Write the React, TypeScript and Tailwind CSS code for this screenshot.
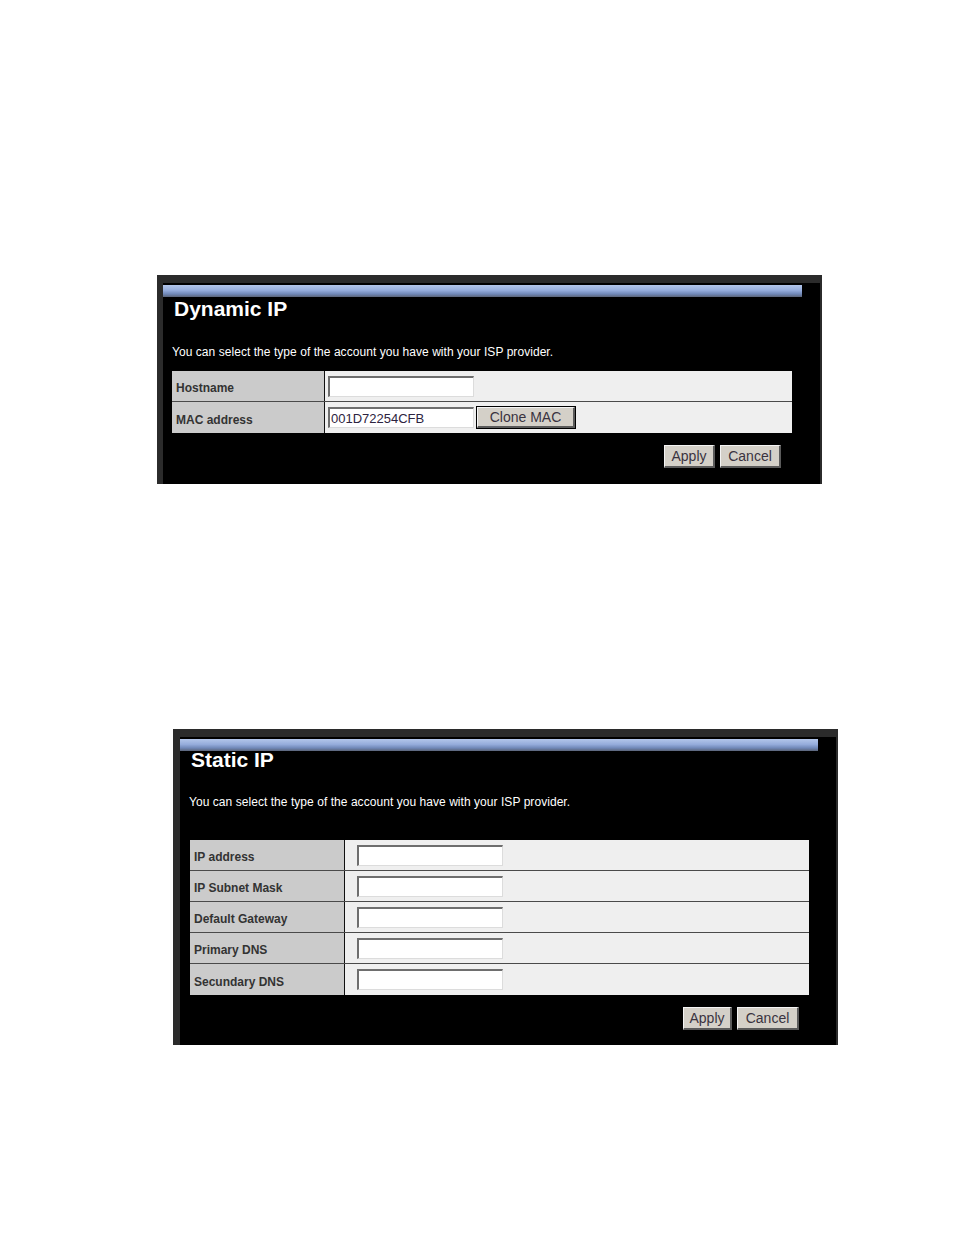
import React from 'react';

const font = { fontFamily: '"Liberation Sans", Arial, sans-serif' };

// Classic inset text field
const Field: React.FC<{ value?: string; className?: string }> = ({ value = '', className = '' }) => (
  <div
    className={`h-[21px] w-[146px] bg-white border-t-2 border-l-2 border-b border-r border-t-[#6e6e6e] border-l-[#6e6e6e] border-b-[#dcdcdc] border-r-[#dcdcdc] flex items-center pl-[1px] text-[13px] text-[#2d2440] leading-none ${className}`}
  >
    {value}
  </div>
);

// Raised grey button
const Btn: React.FC<{ label: string; className?: string }> = ({ label, className = '' }) => (
  <div
    className={`bg-[#d4d0c8] border-t border-l border-b-2 border-r-2 border-t-[#f4f4f4] border-l-[#f4f4f4] border-b-[#5a5a5a] border-r-[#5a5a5a] flex items-center justify-center text-[14px] text-[#3a3340] leading-none ${className}`}
  >
    {label}
  </div>
);

const Row: React.FC<{
  label: string;
  last?: boolean;
  children: React.ReactNode;
  labelClass?: string;
  valueClass?: string;
}> = ({ label, last, children, labelClass = 'w-[153px]', valueClass = 'pl-[3px]' }) => (
  <div className={`flex h-[31px] ${last ? '' : 'border-b border-b-[#4a4a4a]'}`}>
    <div
      className={`bg-[#cbcbcb] border-r border-r-[#111] flex items-center pl-[4px] pt-[4px] text-[12px] font-bold text-[#333] ${labelClass}`}
    >
      {label}
    </div>
    <div className={`flex-1 bg-[#efefef] flex items-center ${valueClass}`}>{children}</div>
  </div>
);

const Panel: React.FC<{
  title: string;
  className: string;
  titleClass: string;
  descClass: string;
  tableClass: string;
  children: React.ReactNode;
  buttonsClass: string;
  applyClass: string;
  cancelClass: string;
}> = ({ title, className, titleClass, descClass, tableClass, children, buttonsClass, applyClass, cancelClass }) => (
  <div className={`bg-black border-t-[8px] border-r-2 border-[#2b2b2b] ${className}`}>
    <div className="mt-[2px] h-[12px] mr-[18px] bg-[linear-gradient(to_bottom,#b3c6ea_0%,#95acdb_45%,#7088b8_75%,#5b6478_100%)]" />
    <div className={`pl-[11px] text-[21px] leading-[24px] font-bold text-white ${titleClass}`}>{title}</div>
    <div className={`pl-[9px] text-[12px] leading-[16px] tracking-[0.05px] text-white ${descClass}`}>
      You can select the type of the account you have with your ISP provider.
    </div>
    <div className={tableClass}>{children}</div>
    <div className={`flex justify-end gap-[5px] mt-[12px] ${buttonsClass}`}>
      <Btn label="Apply" className={applyClass} />
      <Btn label="Cancel" className={cancelClass} />
    </div>
  </div>
);

export default function App() {
  return (
    <div className="bg-white w-[954px] h-[1235px] pt-[275px]" style={font}>
      <Panel
        title="Dynamic IP"
        className="ml-[157px] w-[665px] h-[209px] border-l-[6px]"
        titleClass=""
        descClass="mt-[23px]"
        tableClass="ml-[9px] mt-[11px] w-[620px]"
        buttonsClass="w-[629px] pr-[11px]"
        applyClass="w-[51px] h-[23px]"
        cancelClass="w-[61px] h-[23px]"
      >
        <Row label="Hostname">
          <Field />
        </Row>
        <Row label="MAC address" last>
          <Field value="001D72254CFB" />
          <div className="ml-[2px] border border-black">
            <Btn label="Clone MAC" className="w-[98px] h-[21px] text-[13px]" />
          </div>
        </Row>
      </Panel>

      <Panel
        title="Static IP"
        className="ml-[173px] mt-[245px] w-[665px] h-[316px] border-l-[7px]"
        titleClass="-mt-[3px]"
        descClass="mt-[22px]"
        tableClass="ml-[10px] mt-[30px] w-[619px]"
        buttonsClass="w-[629px] pr-[10px]"
        applyClass="w-[49px] h-[23px]"
        cancelClass="w-[62px] h-[23px]"
      >
        {['IP address', 'IP Subnet Mask', 'Default Gateway', 'Primary DNS', 'Secundary DNS'].map((l, i) => (
          <Row key={l} label={l} last={i === 4} labelClass="w-[155px]" valueClass="pl-[12px]">
            <Field />
          </Row>
        ))}
      </Panel>
    </div>
  );
}
